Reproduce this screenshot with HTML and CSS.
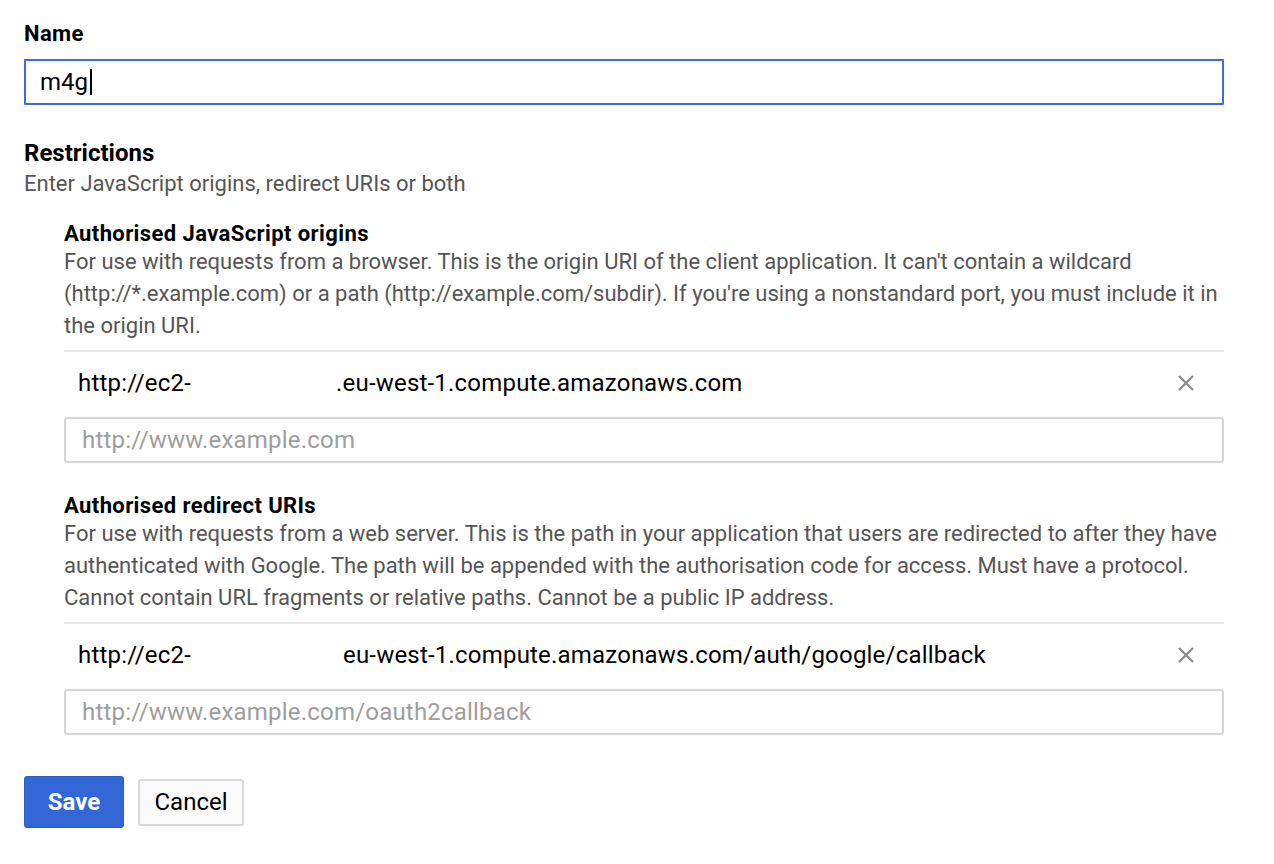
FILE: index.html
```html
<!DOCTYPE html>
<html>
<head>
<meta charset="utf-8">
<link rel="stylesheet" href="styles.css">
</head>
<body>
<form class="page">
  <div class="field">
    <label class="label">Name</label>
    <div class="name-input"><span class="value">m4g</span><span class="caret"></span></div>
  </div>

  <section class="restrictions">
    <h2 class="title">Restrictions</h2>
    <p class="hint">Enter JavaScript origins, redirect URIs or both</p>

    <div class="group">
      <h3 class="group-title">Authorised JavaScript origins</h3>
      <p class="desc">For use with requests from a browser. This is the origin URI of the client application. It can't contain a wildcard (http://*.example.com) or a path (http://example.com/subdir). If you're using a nonstandard port, you must include it in the origin URI.</p>
      <div class="uri-row">
        <span class="uri">http://ec2-<span class="gap g1"></span>.eu-west-1.compute.amazonaws.com</span>
        <span class="remove">
          <svg width="18" height="18" viewBox="0 0 18 18"><path d="M2 2 L16 16 M16 2 L2 16" stroke="#8a8a8a" stroke-width="2.2" fill="none"/></svg>
        </span>
      </div>
      <div class="text-input placeholder">http://www.example.com</div>
    </div>

    <div class="group">
      <h3 class="group-title">Authorised redirect URIs</h3>
      <p class="desc">For use with requests from a web server. This is the path in your application that users are redirected to after they have authenticated with Google. The path will be appended with the authorisation code for access. Must have a protocol. Cannot contain URL fragments or relative paths. Cannot be a public IP address.</p>
      <div class="uri-row">
        <span class="uri">http://ec2-<span class="gap g2"></span>eu-west-1.compute.amazonaws.com/auth/google/callback</span>
        <span class="remove">
          <svg width="18" height="18" viewBox="0 0 18 18"><path d="M2 2 L16 16 M16 2 L2 16" stroke="#8a8a8a" stroke-width="2.2" fill="none"/></svg>
        </span>
      </div>
      <div class="text-input placeholder">http://www.example.com/oauth2callback</div>
    </div>
  </section>

  <div class="actions">
    <button type="button" class="btn btn-primary">Save</button>
    <button type="button" class="btn btn-secondary">Cancel</button>
  </div>
</form>
</body>
</html>
```

FILE: styles.css
```css
* { box-sizing: border-box; }
html, body { margin: 0; padding: 0; background: #fff; }
body {
  font-family: Roboto, "Liberation Sans", Arial, sans-serif;
  color: #000;
  -webkit-font-smoothing: antialiased;
}
.page {
  width: 1224px;
  padding: 20px 0 0 24px;
}
.field { display: flex; flex-direction: column; }
.label {
  font-size: 22px;
  font-weight: 700;
  letter-spacing: 0.4px;
  line-height: 28px;
  margin-bottom: 11px;
}
.name-input {
  width: 1200px;
  height: 46px;
  border: 2px solid #3b6fd6;
  border-radius: 1px;
  display: flex;
  align-items: center;
  padding-left: 14px;
  font-size: 24px;
}
.caret {
  display: inline-block;
  width: 1.5px;
  height: 26px;
  background: #000;
  margin-left: 2px;
}
.restrictions { margin-top: 33px; }
.title {
  margin: 0;
  font-size: 24px;
  font-weight: 700;
  line-height: 30px;
}
.hint {
  margin: 1px 0 0;
  font-size: 22px;
  line-height: 30px;
  color: #555;
}
.group {
  margin-left: 40px;
  width: 1160px;
  margin-top: 23px;
}
.group + .group { margin-top: 31px; }
.group-title {
  margin: 0;
  font-size: 22px;
  font-weight: 700;
  letter-spacing: 0.4px;
  line-height: 24px;
}
.desc {
  margin: 0;
  font-size: 22px;
  line-height: 32px;
  color: #555;
}
.uri-row {
  margin-top: 8px;
  border-top: 2px solid #e8e8e8;
  height: 64px;
  display: flex;
  align-items: center;
  justify-content: space-between;
  padding: 0 29px 0 14px;
  font-size: 24px;
  letter-spacing: 0.2px;
}
.gap { display: inline-block; }
.g1 { width: 145px; }
.g2 { width: 152px; }
.remove { display: flex; align-items: center; }
.text-input {
  margin-top: 3px;
  height: 46px;
  border: 2px solid #d6d6d6;
  border-radius: 3px;
  display: flex;
  align-items: center;
  padding-left: 16px;
  font-size: 24px;
  letter-spacing: 0.2px;
}
.placeholder { color: #9e9e9e; }
.actions {
  margin-top: 41px;
  display: flex;
  align-items: center;
  gap: 14px;
}
.btn {
  font-family: Roboto, "Liberation Sans", Arial, sans-serif;
  font-size: 24px;
  border-radius: 3px;
  cursor: pointer;
  padding: 0;
}
.btn-primary {
  width: 100px;
  height: 52px;
  background: #3367d6;
  border: 1px solid #2a5cc9;
  color: #fff;
  font-weight: 700;
}
.btn-secondary {
  width: 106px;
  height: 47px;
  background: #fafafa;
  border: 2px solid #d9d9d9;
  color: #000;
}
```
